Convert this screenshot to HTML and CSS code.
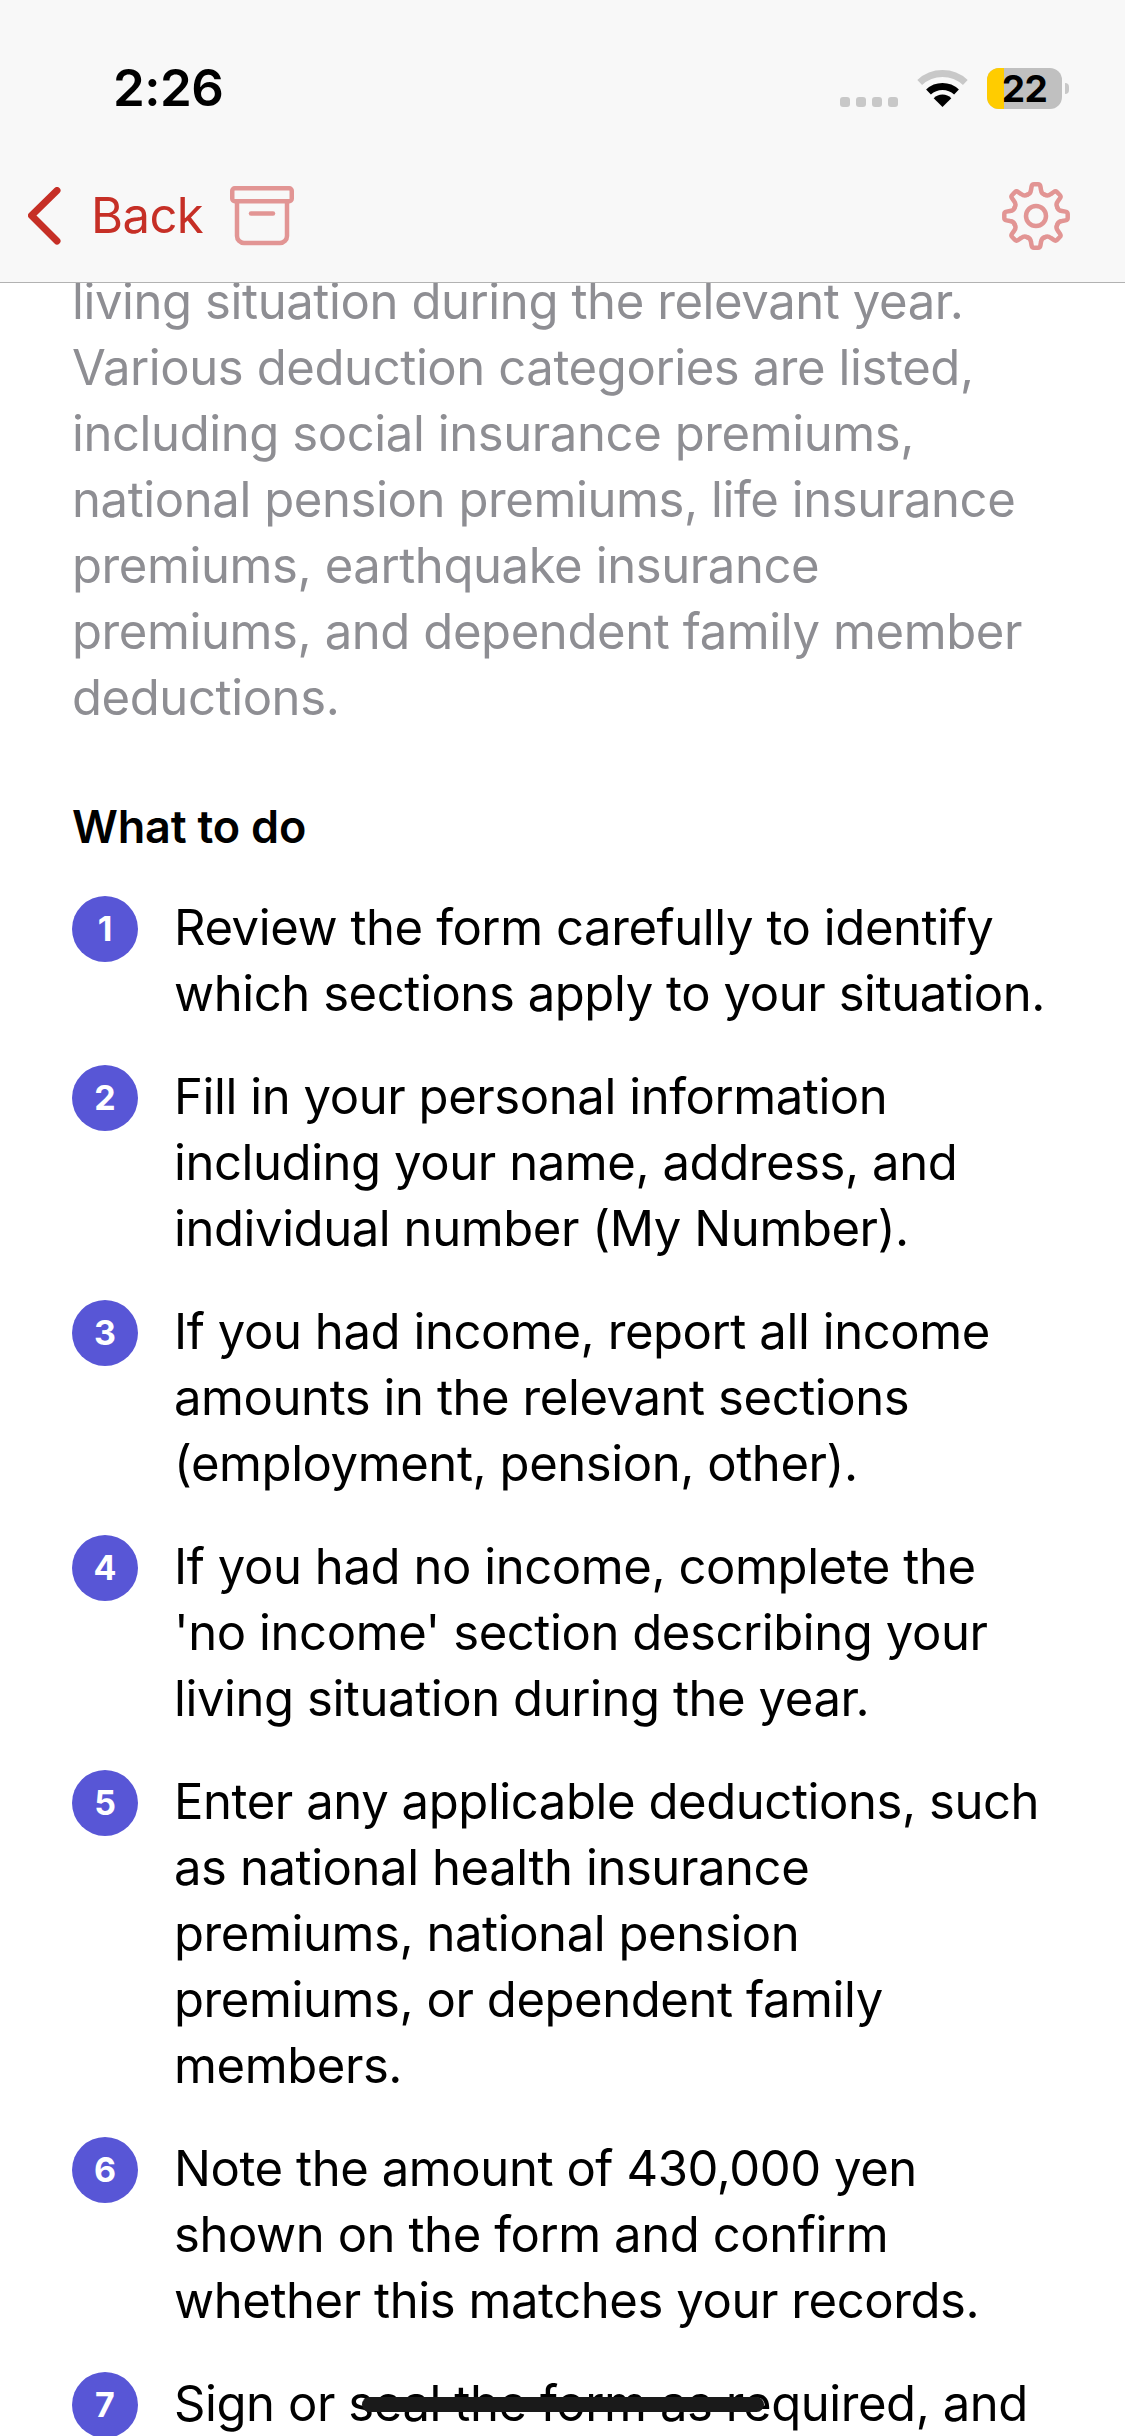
FILE: index.html
```html
<!DOCTYPE html>
<html lang="en">
<head>
<meta charset="utf-8">
<title>What to do</title>
<link rel="stylesheet" href="styles.css">
</head>
<body>
<div class="screen">
  <header class="top">
    <div class="status">
      <span class="time">2:26</span>
      <div class="status-icons">
        <span class="signal"><i></i><i></i><i></i><i></i></span>
        <svg class="wifi" width="51" height="37" viewBox="0 0 51 37">
          <path d="M2.7 12.5 A33.5 33.5 0 0 1 48.3 12.5" fill="none" stroke="#c8c8c8" stroke-width="7"/>
          <path d="M11.5 22 A20.5 20.5 0 0 1 39.5 22" fill="none" stroke="#000" stroke-width="7"/>
          <path d="M25.5 37 L16.7 28.2 A12.5 12.5 0 0 1 34.3 28.2 Z" fill="#000"/>
        </svg>
        <div class="battery"><span class="fill"></span><span class="level">22</span></div>
        <span class="nub"></span>
      </div>
    </div>
    <nav class="nav">
      <div class="nav-left">
        <svg class="chev" width="33" height="58" viewBox="0 0 33 58"><path d="M29 3.5 L3.5 28.5 L29 54" fill="none" stroke="#c62f26" stroke-width="7" stroke-linecap="round" stroke-linejoin="round"/></svg>
        <span class="back">Back</span>
        <svg class="archive" width="64" height="60" viewBox="0 0 64 60" fill="none" stroke="#e29594" stroke-width="4.5" stroke-linejoin="round" stroke-linecap="round"><rect x="2.25" y="2.25" width="59.5" height="13" rx="2.5"/><path d="M7 15.5 V50 a7 7 0 0 0 7 7 H50 a7 7 0 0 0 7 -7 V15.5"/><path d="M21 27.5 H43"/></svg>
      </div>
      <svg class="gear" width="68" height="68" viewBox="0 0 68 68" fill="none" stroke="#e29594" stroke-width="4.5" stroke-linecap="round" stroke-linejoin="round">
        <defs><path id="tooth" d="M25.2 12.75 Q28.5 12 29 8 L29.6 4.5 Q30 2.3 32 2.3 H36 Q38 2.3 38.4 4.5 L39 8 Q39.5 12 42.8 12.75"/></defs>
        <use href="#tooth"/>
        <use href="#tooth" transform="rotate(45 34 34)"/>
        <use href="#tooth" transform="rotate(90 34 34)"/>
        <use href="#tooth" transform="rotate(135 34 34)"/>
        <use href="#tooth" transform="rotate(180 34 34)"/>
        <use href="#tooth" transform="rotate(225 34 34)"/>
        <use href="#tooth" transform="rotate(270 34 34)"/>
        <use href="#tooth" transform="rotate(315 34 34)"/>
        <circle cx="34" cy="34" r="10"/>
      </svg>
    </nav>
  </header>
  <main class="content">
    <p class="summary">living situation during the relevant year. Various deduction categories are listed, including social insurance premiums, national pension premiums, life insurance premiums, earthquake insurance premiums, and dependent family member deductions.</p>
    <h2 class="heading">What to do</h2>
    <ol class="steps">
      <li class="step"><span class="num">1</span><span class="text">Review the form carefully to identify which sections apply to your situation.</span></li>
      <li class="step"><span class="num">2</span><span class="text">Fill in your personal information including your name, address, and individual number (My Number).</span></li>
      <li class="step"><span class="num">3</span><span class="text">If you had income, report all income amounts in the relevant sections (employment, pension, other).</span></li>
      <li class="step"><span class="num">4</span><span class="text">If you had no income, complete the 'no income' section describing your living situation during the year.</span></li>
      <li class="step"><span class="num">5</span><span class="text">Enter any applicable deductions, such as national health insurance premiums, national pension premiums, or dependent family members.</span></li>
      <li class="step"><span class="num">6</span><span class="text">Note the amount of 430,000 yen shown on the form and confirm whether this matches your records.</span></li>
      <li class="step"><span class="num">7</span><span class="text">Sign or seal the form as required, and</span></li>
    </ol>
  </main>
  <div class="home"></div>
</div>
</body>
</html>
```

FILE: styles.css
```css
* { box-sizing: border-box; }
html, body { margin: 0; padding: 0; background: #fff; }
.screen {
  position: relative;
  width: 1125px;
  height: 2436px;
  overflow: hidden;
  display: flex;
  flex-direction: column;
  font-family: Inter, "Liberation Sans", sans-serif;
  color: #000;
}
.top {
  flex: none;
  height: 283px;
  background: #f8f8f8;
  border-bottom: 1px solid #b2b2b2;
  display: flex;
  flex-direction: column;
}
.status {
  flex: none;
  height: 165px;
  display: flex;
  justify-content: space-between;
  align-items: flex-start;
  padding: 0 56px 0 113px;
}
.time {
  margin-top: 63px;
  font-size: 51px;
  font-weight: 600;
  line-height: 50px;
  letter-spacing: -0.5px;
}
.status-icons {
  display: flex;
  align-items: flex-start;
  margin-top: 68px;
}
.signal { display: flex; gap: 6px; margin: 29px 19px 0 0; }
.signal i { display: block; width: 10px; height: 10px; border-radius: 3px; background: #c8c8c8; }
.wifi { margin: 2px 19px 0 0; }
.battery {
  position: relative;
  width: 75px;
  height: 41px;
  border-radius: 12px;
  background: #c0c0c0;
}
.fill { position: absolute; left: 0; top: 0; bottom: 0; width: 17px; background: #ffcc00; border-radius: 12px 0 0 12px; }
.level {
  position: absolute;
  inset: 0;
  text-align: center;
  font-size: 37px;
  font-weight: 700;
  line-height: 41px;
  letter-spacing: -0.5px;
}
.nub { width: 4px; height: 11px; margin: 15px 0 0 3px; background: #c8c8c8; border-radius: 0 4px 4px 0; }
.nav {
  flex: 1;
  display: flex;
  justify-content: space-between;
  align-items: flex-start;
  padding: 22px 55px 0 28px;
}
.nav-left { display: flex; align-items: center; height: 60px; }
.chev { margin: -2px 30px 0 0; }
.back { font-size: 49px; line-height: 60px; color: #c62f26; letter-spacing: -0.6px; margin: -3px 27px 0 0; }
.archive { margin-top: -2px; }
.gear { margin-top: -5px; }
.content { flex: 1; min-height: 0; overflow: hidden; padding: 0 75px 0 72px; }
.summary {
  margin: -14px 0 0;
  font-size: 49px;
  line-height: 66px;
  letter-spacing: -0.4px;
  color: #8e8e93;
}
.heading {
  margin: 66px 0 0;
  font-size: 45px;
  line-height: 60px;
  font-weight: 600;
  letter-spacing: -0.2px;
}
.steps { list-style: none; margin: 38px 0 0 0; padding: 0; display: flex; flex-direction: column; gap: 37px; }
.step { display: flex; align-items: flex-start; gap: 36px; }
.num {
  flex: none;
  width: 66px;
  height: 66px;
  margin-top: 1px;
  border-radius: 50%;
  background: #5856d6;
  color: #fff;
  font-size: 34px;
  font-weight: 700;
  line-height: 66px;
  text-align: center;
}
.text { font-size: 49px; line-height: 66px; letter-spacing: -0.42px; }
.home {
  position: absolute;
  left: 362px;
  top: 2397px;
  width: 402px;
  height: 15px;
  border-radius: 8px;
  background: #1a1a1a;
}
```
